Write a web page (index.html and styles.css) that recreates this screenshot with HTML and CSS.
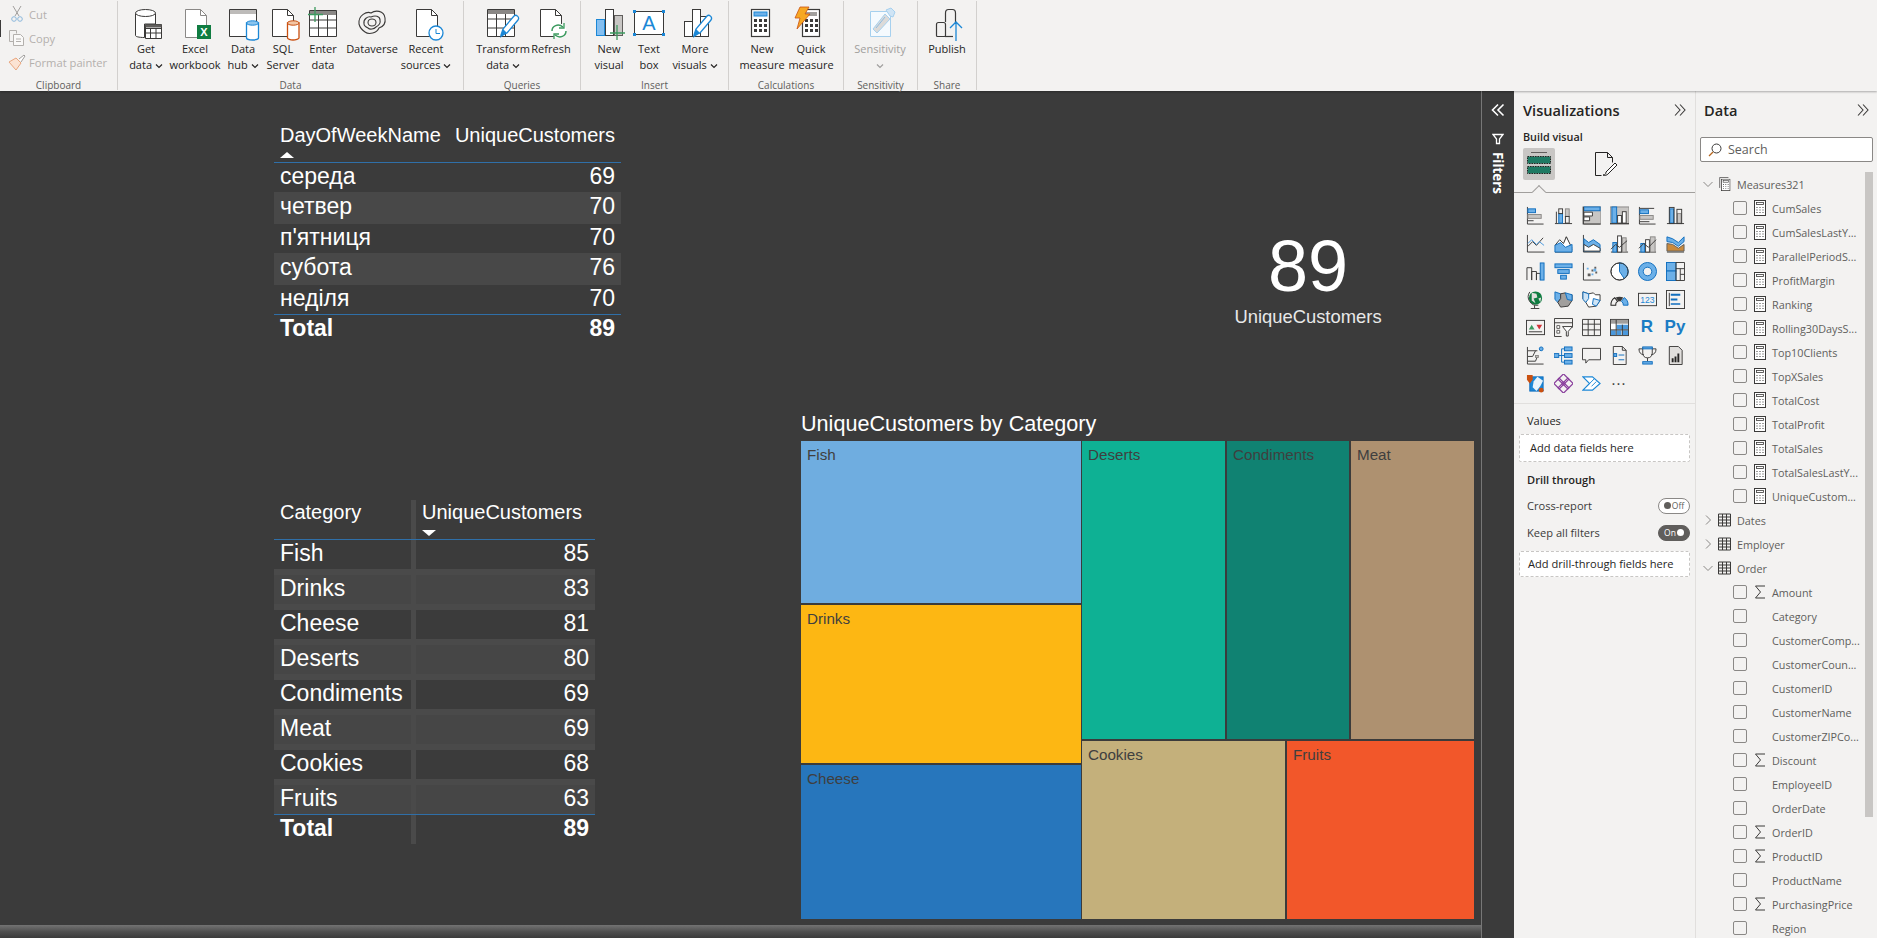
FILE: index.html
```html
<!DOCTYPE html>
<html>
<head>
<meta charset="utf-8">
<title>Power BI Desktop</title>
<link rel="stylesheet" href="styles.css">
</head>
<body>
<svg class="defs" width="0" height="0">
  <symbol id="calc" viewBox="0 0 12 16">
    <rect x=".5" y=".5" width="11" height="15" fill="#fff" stroke="#3b3a39"/>
    <rect x="2.5" y="2.5" width="7" height="2" fill="none" stroke="#3b3a39" stroke-width=".8"/>
    <path d="M2.5 7h1v1h-1zM5.5 7h1v1h-1zM8.5 7h1v1h-1zM2.5 9.5h1v1h-1zM5.5 9.5h1v1h-1zM8.5 9.5h1v1h-1zM2.5 12h1v1h-1zM5.5 12h1v1h-1zM8.5 12h1v1h-1z" fill="#3b3a39"/>
  </symbol>
  <symbol id="grid" viewBox="0 0 13 13">
    <path d="M.5.5h12v12H.5zM.5 3.5h12M.5 6.5h12M.5 9.5h12M4.5 .5v12M8.5 .5v12" fill="none" stroke="#3b3a39"/>
  </symbol>
  <symbol id="sigma" viewBox="0 0 12 14">
    <path d="M11 1H1.5L6.5 7 1.5 13H11" fill="none" stroke="#3b3a39"/>
  </symbol>
  <symbol id="more" viewBox="0 0 8 8">
    <path d="M1 2.5L4 5.5 7 2.5" fill="none" stroke="#252423" stroke-width="1.2"/>
  </symbol>
  <symbol id="dbl" viewBox="0 0 14 14">
    <path d="M2 1.5L7 7 2 12.5M7 1.5L12 7 7 12.5" fill="none" stroke="#3b3a39" stroke-width="1.1"/>
  </symbol>
</svg>

<div class="ribbon">
  <div class="group clip">
    <div class="group-body">
      <div class="clip-list">
        <div class="clip-item"><svg width="18" height="18" viewBox="0 0 18 18"><path d="M5 1l6 10M13 1L7 11" fill="none" stroke="#a19f9d"/><circle cx="6" cy="14" r="2.3" fill="none" stroke="#8cb8dc"/><circle cx="12" cy="14" r="2.3" fill="none" stroke="#8cb8dc"/></svg><span>Cut</span></div>
        <div class="clip-item"><svg width="18" height="18" viewBox="0 0 18 18"><path d="M1.500 1.500h7v3M1.500 1.500v11h4" fill="none" stroke="#b3b0ad"/><path d="M5.500 5.500h7l3 3v8h-10z" fill="#faf9f8" stroke="#b3b0ad"/><path d="M8 10h5M8 12.500h5" stroke="#b3b0ad"/></svg><span>Copy</span></div>
        <div class="clip-item"><svg width="18" height="18" viewBox="0 0 18 18"><path d="M1 9l7-4 5 5-5 7C6 14 3 12 1 9z" fill="#fbe3d3" stroke="#e9a77f"/><path d="M11 6l5-4 1 1-4 6" fill="#fff" stroke="#a19f9d"/></svg><span>Format painter</span></div>
      </div>
    </div>
    <div class="group-name">Clipboard</div>
  </div>

  <div class="group data">
    <div class="group-body">
      <div class="btn w44"><svg class="ico" viewBox="0 0 32 32"><path d="M5.500 6.500v22c0 1 3 2 9 2V17h11V6.500" fill="#fff" stroke="#3b3a39"/><ellipse cx="15.500" cy="6" rx="10" ry="3.500" fill="#fff" stroke="#3b3a39"/><path d="M15.500 17.500h16v14h-16zM15.500 21.500h16M15.500 26h16M20.500 21.500v10M26 21.500v10" fill="#fff" stroke="#3b3a39"/><rect x="15.500" y="17.500" width="16" height="3" fill="#605e5c"/></svg><div class="txt">Get<br>data <svg class="caret"><use href="#more"/></svg></div></div>
      <div class="btn w54"><svg class="ico" viewBox="0 0 32 32"><path d="M6.500 2.500h15l6 6v22h-21z" fill="#fff" stroke="#8a8886"/><path d="M21.500 2.500v6h6" fill="none" stroke="#8a8886"/><rect x="18" y="18" width="14" height="14" fill="#107c41"/><text x="25" y="29" class="xl">X</text></svg><div class="txt">Excel<br>workbook</div></div>
      <div class="btn w42"><svg class="ico" viewBox="0 0 32 32"><path d="M2.500 2.500h27v27h-27z" fill="#fff" stroke="#3b3a39"/><rect x="3" y="3" width="26" height="4" fill="#bdbbb9"/><path d="M19.500 16v15c0 1 3 2 6 2s6-1 6-2V16z" fill="#fff" stroke="#1b87d6" stroke-width="1.300"/><ellipse cx="25.500" cy="16" rx="6" ry="2.200" fill="#8ac4ee" stroke="#1b87d6"/></svg><div class="txt">Data<br>hub <svg class="caret"><use href="#more"/></svg></div></div>
      <div class="btn w38"><svg class="ico" viewBox="0 0 32 32"><path d="M5.500 2.500h15l6 6v21h-21z" fill="#fff" stroke="#3b3a39"/><path d="M20.500 2.500v6h6" fill="none" stroke="#3b3a39"/><path d="M20.500 16v15c0 1 3 2 5.500 2s6-1 6-2V16z" fill="#fff" stroke="#ca5010" stroke-width="1.300"/><ellipse cx="26.200" cy="16" rx="5.800" ry="2.200" fill="#f2c5a4" stroke="#ca5010"/></svg><div class="txt">SQL<br>Server</div></div>
      <div class="btn w42"><svg class="ico" viewBox="0 0 32 32"><path d="M2.500 3.500h27v26h-27zM2.500 13h27M2.500 21h27M11.500 8v21.500M20.500 8v21.500" fill="#fff" stroke="#3b3a39"/><rect x="3" y="4" width="26" height="4" fill="#8a8886"/><path d="M8 0v15M1 7.500h15" stroke="#3c9a5f" stroke-width="1.300"/></svg><div class="txt">Enter<br>data</div></div>
      <div class="btn w56"><svg class="ico" viewBox="0 0 32 32"><g fill="none" stroke="#3b3a39" stroke-width="1.100"><path d="M3 17C2 8 11 4 15 6c4-3 13-3 14 5 1 6-3 9-6 10-2 5-10 7-14 4-3-2-5-4-6-8z"/><path d="M8 17c-1-5 4-8 7-7 4-2 9-1 9 3 1 4-2 6-4 7-2 2-6 3-8 1-2-1-4-2-4-4z"/><ellipse cx="16" cy="15.500" rx="4" ry="3.500"/></g></svg><div class="txt one">Dataverse</div></div>
      <div class="btn w52"><svg class="ico" viewBox="-2 0 32 32"><path d="M4.500 2.500h15l6 6v21h-21z" fill="#fff" stroke="#3b3a39"/><path d="M19.500 2.500v6h6" fill="none" stroke="#3b3a39"/><circle cx="24" cy="26" r="7" fill="#fff" stroke="#1b87d6" stroke-width="1.300"/><path d="M24 22v4.500h4" fill="none" stroke="#1b87d6"/></svg><div class="txt">Recent<br>sources <svg class="caret"><use href="#more"/></svg></div></div>
    </div>
    <div class="group-name">Data</div>
  </div>

  <div class="group queries">
    <div class="group-body">
      <div class="btn w54"><svg class="ico" viewBox="2 0 32 32"><path d="M2.500 2.500h27v27h-27zM2.500 12h27M2.500 21h27M11.500 7v22.500M20.500 7v22.500" fill="#fff" stroke="#3b3a39"/><rect x="3" y="3" width="26" height="4" fill="#8a8886"/><path d="M16 28l2-6 11-13c2-2 6 1 4 4L22 26z" fill="#fff" stroke="#1b87d6" stroke-width="1.300"/><path d="M15 31l3-9 4 4z" fill="#1b87d6"/></svg><div class="txt">Transform<br>data <svg class="caret"><use href="#more"/></svg></div></div>
      <div class="btn w42"><svg class="ico" viewBox="0 0 32 32"><path d="M5.500 2.500h15l6 6v21h-21z" fill="#fff" stroke="#3b3a39"/><path d="M20.500 2.500v6h6" fill="none" stroke="#3b3a39"/><circle cx="24" cy="24" r="7.500" fill="#fff"/><path d="M17 24c0-5 6-8 11-4M31 24c0 5-6 8-11 4" fill="none" stroke="#3c9a5f" stroke-width="1.500"/><path d="M29 16v5h-5M19 32v-5h5" fill="none" stroke="#3c9a5f" stroke-width="1.300"/></svg><div class="txt">Refresh<br>&nbsp;</div></div>
    </div>
    <div class="group-name">Queries</div>
  </div>

  <div class="group insert">
    <div class="group-body">
      <div class="btn w40"><svg class="ico" viewBox="0 0 32 32"><rect x="3.500" y="12.500" width="8" height="16" fill="#85bff0" stroke="#1b87d6"/><rect x="12.500" y="2.500" width="8" height="26" fill="#fff" stroke="#3b3a39"/><rect x="21.500" y="8.500" width="8" height="20" fill="#c8c6c4" stroke="#605e5c"/><path d="M24 18v15M17 26h15" stroke="#3c9a5f" stroke-width="1.300"/></svg><div class="txt">New<br>visual</div></div>
      <div class="btn w40"><svg class="ico" viewBox="0 0 32 32"><rect x="1.500" y="4.500" width="29" height="23" fill="#fff" stroke="#3b3a39"/><path d="M0 3h3v3H0zM29 3h3v3h-3zM0 26h3v3H0zM29 26h3v3h-3z" fill="#1b87d6"/><text x="16" y="23" class="boxa">A</text></svg><div class="txt">Text<br>box</div></div>
      <div class="btn w52"><svg class="ico" viewBox="0 0 32 32"><rect x="5.500" y="14.500" width="8" height="15" fill="#fff" stroke="#3b3a39"/><rect x="13.500" y="2.500" width="8" height="27" fill="#fff" stroke="#3b3a39"/><rect x="21.500" y="9.500" width="8" height="20" fill="#fff" stroke="#3b3a39"/><path d="M15 28l2-6 11-13c2-2 6 1 4 4L21 26z" fill="#fff" stroke="#1b87d6" stroke-width="1.300"/><path d="M14 31l3-9 4 4z" fill="#1b87d6"/></svg><div class="txt">More<br>visuals <svg class="caret"><use href="#more"/></svg></div></div>
    </div>
    <div class="group-name">Insert</div>
  </div>

  <div class="group calc">
    <div class="group-body">
      <div class="btn w50"><svg class="ico" viewBox="0 0 32 32"><rect x="5.500" y="2.500" width="18" height="27" fill="#fff" stroke="#3b3a39" stroke-width="1.200"/><rect x="8" y="5" width="13" height="4" fill="#6cb0e8" stroke="#1b87d6"/><path d="M8 12h3v3H8zM13 12h3v3h-3zM18 12h3v3h-3zM8 17h3v3H8zM13 17h3v3h-3zM18 17h3v3h-3zM8 22h3v3H8zM13 22h3v3h-3zM18 22h3v3h-3z" fill="#3b3a39"/></svg><div class="txt">New<br>measure</div></div>
      <div class="btn w48"><svg class="ico" viewBox="0 0 32 32"><rect x="7.500" y="2.500" width="17" height="27" fill="#fff" stroke="#3b3a39" stroke-width="1.200"/><rect x="10" y="5" width="12" height="4" fill="#a19f9d"/><path d="M10 12h3v3h-3zM15 12h3v3h-3zM20 12h3v3h-3zM10 17h3v3h-3zM15 17h3v3h-3zM20 17h3v3h-3zM10 22h3v3h-3zM15 22h3v3h-3zM20 22h3v3h-3z" fill="#3b3a39"/><path d="M5 0h9l-4 7h5L2 22l3-11H0z" fill="#f7a823" stroke="#ca5010" stroke-width=".8"/></svg><div class="txt">Quick<br>measure</div></div>
    </div>
    <div class="group-name">Calculations</div>
  </div>

  <div class="group sens">
    <div class="group-body">
      <div class="btn w62 off"><svg class="ico" viewBox="0 0 32 32"><path d="M6.500 4.500h20v25h-20z" fill="#f5fafe" stroke="#a6d0ee"/><path d="M9 22L21 7l5 5-13 14z" fill="#dcdad8" stroke="#a6d0ee"/><path d="M22 3l5-2 4 4-2 5-3-1z" fill="#cfe4f5" stroke="#a6d0ee"/><path d="M12 21l9-11" stroke="#8cbce4"/></svg><div class="txt">Sensitivity<br><svg class="caret faint"><use href="#more"/></svg></div></div>
    </div>
    <div class="group-name">Sensitivity</div>
  </div>

  <div class="group share">
    <div class="group-body">
      <div class="btn w50"><svg class="ico" viewBox="0 0 32 32"><path d="M5.500 17.500c0-1 .5-2 2-2h5c1 0 2 1 2 2v11c0 .500-.500 1-1 1h-7c-.500 0-1-.500-1-1zM14.500 15V6c0-2 1-3.500 3-3.500h4c2 0 3 1.500 3 3.500v11" fill="none" stroke="#3b3a39" stroke-width="1.200"/><path d="M14 29.500h8" stroke="#3b3a39" stroke-width="1.200"/><path d="M25 34V15M19 21l6-6 6 6" fill="none" stroke="#1b87d6" stroke-width="1.300"/></svg><div class="txt one">Publish</div></div>
    </div>
    <div class="group-name">Share</div>
  </div>
</div>

<div class="main">
  <div class="canvas">
    <div class="visual tbl1">
      <div class="hd"><div class="c">DayOfWeekName<i class="sort up"></i></div><div class="c r">UniqueCustomers</div></div>
      <div class="tr"><div class="c">середа</div><div class="c r">69</div></div>
      <div class="tr alt"><div class="c">четвер</div><div class="c r">70</div></div>
      <div class="tr"><div class="c">п'ятниця</div><div class="c r">70</div></div>
      <div class="tr alt"><div class="c">субота</div><div class="c r">76</div></div>
      <div class="tr"><div class="c">неділя</div><div class="c r">70</div></div>
      <div class="tot"><div class="c">Total</div><div class="c r">89</div></div>
    </div>

    <div class="visual tbl2">
      <div class="hd"><div class="c">Category</div><div class="c">UniqueCustomers<i class="sort down"></i></div></div>
      <div class="tr"><div class="c">Fish</div><div class="c r">85</div></div>
      <div class="tr alt"><div class="c">Drinks</div><div class="c r">83</div></div>
      <div class="tr"><div class="c">Cheese</div><div class="c r">81</div></div>
      <div class="tr alt"><div class="c">Deserts</div><div class="c r">80</div></div>
      <div class="tr"><div class="c">Condiments</div><div class="c r">69</div></div>
      <div class="tr alt"><div class="c">Meat</div><div class="c r">69</div></div>
      <div class="tr"><div class="c">Cookies</div><div class="c r">68</div></div>
      <div class="tr alt last"><div class="c">Fruits</div><div class="c r">63</div></div>
      <div class="tot"><div class="c">Total</div><div class="c r">89</div></div>
    </div>

    <div class="visual card">
      <div class="card-num">89</div>
      <div class="card-label">UniqueCustomers</div>
    </div>

    <div class="visual tree">
      <div class="tree-title">UniqueCustomers by Category</div>
      <div class="tree-map">
        <div class="tree-left">
          <div class="cell fish">Fish</div>
          <div class="cell drinks">Drinks</div>
          <div class="cell cheese">Cheese</div>
        </div>
        <div class="tree-right">
          <div class="tree-top">
            <div class="cell deserts">Deserts</div>
            <div class="cell condiments">Condiments</div>
            <div class="cell meat">Meat</div>
          </div>
          <div class="tree-bot">
            <div class="cell cookies">Cookies</div>
            <div class="cell fruits">Fruits</div>
          </div>
        </div>
      </div>
    </div>
    <div class="visual page-edge"></div>
  </div>

  <div class="filters">
    <svg width="14" height="14" viewBox="0 0 14 14"><path d="M7 1.500L1.500 7 7 12.500M12.500 1.500L7 7l5.500 5.500" fill="none" stroke="#fff" stroke-width="1.600"/></svg>
    <svg class="f-ico" width="12" height="12" viewBox="0 0 12 12"><path d="M1 1.500h10L7.500 6v4.500h-3V6z" fill="none" stroke="#fff" stroke-width="1.300"/></svg>
    <div class="f-label">Filters</div>
  </div>

  <div class="viz">
    <div class="pane-head"><span>Visualizations</span><svg width="14" height="14"><use href="#dbl"/></svg></div>
    <div class="build">Build visual</div>
    <div class="build-tabs">
      <div class="tab on"><svg width="26" height="26" viewBox="0 0 26 26"><path d="M5 1.500h16" stroke="#605e5c"/><rect x="1.500" y="5.500" width="23" height="7" fill="#1e7a63" stroke="#252423" stroke-dasharray="1.500 1"/><rect x="1.500" y="15.500" width="23" height="7" fill="#1e7a63" stroke="#252423" stroke-dasharray="1.500 1"/></svg></div>
      <div class="tab"><svg width="26" height="26" viewBox="0 0 26 26"><path d="M3.500 1.500h12l5 5v5M3.500 1.500v23h6M15.500 1.500v5h5" fill="none" stroke="#252423"/><path d="M11 24c2 0 3-1 3-3l9-9 2 2-9 9c-1 1-3 2-5 1z" fill="#fff" stroke="#252423"/></svg></div>
      <i class="notch"></i>
    </div>
    <div class="viz-grid">
      <svg viewBox="0 0 20 20"><path class="k" d="M1.500 1v18h17"/><rect class="b" x="2" y="3" width="8" height="4"/><rect class="g" x="2" y="9" width="14" height="4"/><path class="k" d="M2 15.500h6"/></svg>
      <svg viewBox="0 0 20 20"><path class="k" d="M1 18.500h18M2.500 18V6"/><rect class="b" x="5" y="8" width="4" height="10"/><rect class="k" x="5" y="3" width="4" height="5"/><rect class="g" x="12" y="3" width="4" height="8"/><rect class="k" x="12" y="11" width="4" height="7"/></svg>
      <svg viewBox="0 0 20 20"><rect class="g" x="1" y="1" width="19" height="18"/><rect class="b" x="2" y="1" width="17" height="4"/><path class="w" d="M2 6.500h9v4H2zM2 11.500h6v4H2z"/><path class="k" d="M1.500 1v18h18"/></svg>
      <svg viewBox="0 0 20 20"><rect class="g" x="0" y="1" width="20" height="18"/><rect class="b" x="2" y="1" width="5" height="17"/><rect class="w" x="8" y="10" width="4" height="8"/><rect class="w" x="13" y="6" width="4" height="12"/><path class="k" d="M0 18.500h20"/></svg>
      <svg viewBox="0 0 20 20"><path class="k" d="M1.500 1v18h17"/><path class="k" d="M2 2.500h15"/><rect class="b" x="2" y="4" width="9" height="4"/><rect class="g" x="2" y="10" width="14" height="4"/><path class="k" d="M2 16.500h10"/></svg>
      <svg viewBox="0 0 20 20"><path class="k" d="M1 18.500h18"/><rect class="b" x="4" y="3" width="4" height="15"/><rect class="g" x="12" y="8" width="4" height="10"/><rect class="k" x="3.500" y="1.500" width="5" height="17"/><rect class="k" x="11.500" y="3.500" width="5" height="15"/></svg>

      <svg viewBox="0 0 20 20"><path class="k" d="M1.500 1v18h18M2 13l5-5 4 4 7-8"/><path class="bl" d="M2 10l4-4 5 5 3-3 5 4"/></svg>
      <svg viewBox="0 0 20 20"><path class="w2" d="M8 17l5-14 6 14z"/><path class="k" d="M1 19h18"/><path class="w" d="M1 12l5-6 4 4 3-7 6 12"/><path class="b" d="M1 19v-7l6-3 5 5 7-3v8z"/></svg>
      <svg viewBox="0 0 20 20"><path class="k" d="M1.500 1v18h18"/><path class="b" d="M2 5l5 4 5-3 7 5v7H2z"/><path class="w" d="M2 11l5 3 5-3 7 4v3H2z"/></svg>
      <svg viewBox="0 0 20 20"><path class="k" d="M1 19h18"/><rect class="b" x="3" y="9" width="4" height="10"/><rect class="g" x="13" y="4" width="4" height="15"/><rect class="w" x="8" y="2" width="4" height="17"/><path class="k" d="M1 16l5-5 4 3 8-7"/></svg>
      <svg viewBox="0 0 20 20"><path class="k" d="M1 19h18"/><rect class="b" x="3" y="10" width="4" height="9"/><rect class="w" x="8" y="6" width="4" height="13"/><rect class="g" x="13" y="3" width="5" height="16"/><path class="k" d="M1 15l5-5 5 4 8-8"/></svg>
      <svg viewBox="0 0 20 20"><path class="k" d="M1 19h18"/><path d="M1 3l6 2 6 4 6-6v5l-6 5-6-4-6-1z" fill="#6cb0e8" stroke="#106ebe"/><path d="M1 10l6 1 6 4 6-4v7H1z" fill="#ca8a3c" stroke="#605e5c"/></svg>

      <svg viewBox="0 0 20 20"><path class="k" d="M1 19V6h5v13M6 19v-9h5v9M11 19V12h4v7"/><rect class="b" x="15" y="1" width="4" height="18"/></svg>
      <svg viewBox="0 0 20 20"><rect class="b" x="1" y="2" width="18" height="4"/><rect class="b" x="4" y="8" width="12" height="4"/><rect class="b" x="7" y="14" width="6" height="4"/></svg>
      <svg viewBox="0 0 20 20"><path class="k" d="M1.500 1v18h18"/><path d="M6 12h3v3H6zM10 8h2v2h-2zM13 5h2v2h-2zM14 10h2v2h-2z" fill="#605e5c"/><path d="M10 12h2v2h-2zM5 6h2v2H5zM12 7h3v3h-3z" fill="#6cb0e8"/></svg>
      <svg viewBox="0 0 20 20"><circle class="w" cx="10" cy="10" r="9"/><path class="b" d="M10 10V1a9 9 0 0 1 5 16.500z"/><circle class="k" cx="10" cy="10" r="9"/></svg>
      <svg viewBox="0 0 20 20"><circle cx="10" cy="10" r="7" fill="none" stroke="#6cb0e8" stroke-width="5"/><circle class="bk" cx="10" cy="10" r="9.500"/><circle class="bk" cx="10" cy="10" r="4.500"/></svg>
      <svg viewBox="0 0 20 20"><rect class="b" x=".5" y=".5" width="10" height="9"/><rect class="b" x=".5" y="9.500" width="10" height="10"/><path class="k" d="M10.500 .5h9v19h-9zM10.500 7h9M15 7v12.500M15 13h4.500"/></svg>

      <svg viewBox="0 0 20 20"><circle cx="10" cy="8.500" r="7" fill="#107c41"/><path d="M6 3l5 1 1 4-4 1 2 5-4-3zM13 9l3-1-1 5z" fill="#e1dfdd"/><path class="k" d="M4 2a9 9 0 0 0 9 14M9 16v3M5 19.500h9"/></svg>
      <svg viewBox="0 0 20 20"><path d="M1 2l6 2v5l-3 4-3-3z" fill="#6cb0e8" stroke="#106ebe"/><path d="M7 4l5-1 2 2 5 0v6l-4 6-8 1-3-5 3-4z" fill="#a19f9d" stroke="#3b3a39"/><path d="M12 3l7 2v6l-5-1z" fill="#6cb0e8" stroke="#106ebe"/></svg>
      <svg viewBox="0 0 20 20"><path class="w" d="M1 2l6 2 5-1 2 2 5 0v6l-4 6-8 1-3-5-3-4z" stroke="#106ebe"/><path d="M1 2l6 2v5L4 13 1 10z" fill="#cfe4f5" stroke="#106ebe"/><path d="M12 9l7 2-4 6-4-2z" fill="#cfe4f5" stroke="#106ebe"/></svg>
      <svg viewBox="0 0 20 20"><path d="M1 16a9 9 0 0 1 4-8l3 4a4 4 0 0 0-2 4z" fill="none" stroke="#252423" stroke-width="1.100"/><path d="M6 8a9 9 0 0 1 8 0l-3 4a4 4 0 0 0-2 0z" fill="#3b3a39"/><path d="M15 8a9 9 0 0 1 4 8h-5a4 4 0 0 0-2-4z" fill="#6cb0e8" stroke="#106ebe"/></svg>
      <svg viewBox="0 0 20 20"><rect class="k" x=".5" y="3.500" width="19" height="13"/><text x="10" y="14" class="n123">123</text></svg>
      <svg viewBox="0 0 20 20"><rect class="k" x=".5" y=".5" width="19" height="19"/><path class="k" d="M3.500 3v14"/><path d="M5 4h10v2H5zM5 9h7v2H5zM5 14h10v1.500H5z" fill="#106ebe"/></svg>

      <svg viewBox="0 0 20 20"><rect class="k" x=".5" y="2.500" width="19" height="15"/><path d="M3 12l3-5 3 5z" fill="#3c9a5f"/><path d="M11 7h6l-3 5z" fill="#d13438"/><path class="k" d="M3 14.500h14"/></svg>
      <svg viewBox="0 0 20 20"><path class="k" d="M.5 19.500V.5h19V10M.5 5h19M.5 19.500H8"/><path d="M3 8h3v3H3zM3 13h3v3H3z" fill="#fff" stroke="#605e5c"/><path d="M9 9h10.500L15 14v5h-2v-5z" fill="#fff" stroke="#3b3a39"/></svg>
      <svg viewBox="0 0 20 20"><path class="k" d="M.5 1.500h19v17H.5zM.5 6.500h19M.5 12.500h19M6.500 1.500v17M13 1.500v17"/></svg>
      <svg viewBox="0 0 20 20"><rect x=".5" y="1.500" width="19" height="17" fill="#fff" stroke="#3b3a39"/><rect x="1" y="2" width="18" height="4" fill="#a19f9d"/><path d="M7 7h12v5H7zM7 13h5v5H7zM13 13h6v5h-6zM1 13h5v5H1z" fill="#4a98dc"/><path class="k" d="M1 12.500h18M6.500 2v16M13 7v11"/></svg>
      <div class="lang">R</div>
      <div class="lang">Py</div>

      <svg viewBox="0 0 20 20"><path class="k" d="M1.500 1v18h17M2 5h10M2 11h5l3-6M2 16h8l2-5"/><circle class="b" cx="16" cy="3" r="2"/><rect class="g" x="10" y="10" width="3" height="2"/></svg>
      <svg viewBox="0 0 20 20"><rect class="b" x="0" y="8" width="5" height="4"/><rect class="b" x="11" y="1" width="8" height="4"/><rect class="b" x="11" y="8" width="8" height="4"/><rect class="b" x="11" y="15" width="8" height="4"/><path class="bk" d="M5 10h6M8 3v14M8 3h3M8 17h3"/></svg>
      <svg viewBox="0 0 20 20"><path class="k" d="M.5 2.500h19v12H7L4 18v-3.500H.5z" stroke="#106ebe"/></svg>
      <svg viewBox="0 0 20 20"><path class="k" d="M3.500 .5H13l4 4v15H3.500z"/><path class="k" d="M13 .5v4h4"/><path class="bk" d="M9 9.500h6M9 14.500h6"/><rect class="b" x="4" y="8" width="3" height="3"/></svg>
      <svg viewBox="0 0 20 20"><path class="k" d="M5 1.500h10v6c0 3-2 5-5 5s-5-2-5-5zM5 3H1c0 4 2 6 5 6M15 3h4c0 4-2 6-5 6M10 12.500V16"/><rect class="b" x="5" y="16.500" width="10" height="2.500"/><rect class="b" x="5" y="1" width="10" height="2"/></svg>
      <svg viewBox="0 0 20 20"><path d="M3.500 .5H13l4 4v15H3.500z" fill="#e1dfdd" stroke="#3b3a39"/><path d="M6 17v-4h2v4zM9 17v-6h2v6zM12 17V8h2v9z" fill="#252423"/></svg>

      <svg viewBox="0 0 20 20"><rect x="4" y="3" width="14" height="15" fill="#1b87d6" stroke="#106ebe"/><path d="M8 8l4-5 6 4-3 6-4 5-4-4z" fill="#e8f3fb"/><path d="M1 1h6v5l-3 4-3-4z" fill="#ca5010"/><circle cx="16" cy="17" r="2.500" fill="#ca5010"/></svg>
      <svg viewBox="0 0 20 20"><g fill="none" stroke="#8a3f9d" stroke-width="1.300"><rect x="6" y="1.500" width="8" height="8" transform="rotate(45 10 5.500)"/><rect x="6" y="10.500" width="8" height="8" transform="rotate(45 10 14.500)"/><rect x="1.500" y="6" width="8" height="8" transform="rotate(45 5.500 10)"/><rect x="10.500" y="6" width="8" height="8" transform="rotate(45 14.500 10)"/></g></svg>
      <svg viewBox="0 0 20 20"><path d="M1 3h10l8 7-8 7H1l7-7z" fill="#fff" stroke="#1b87d6" stroke-width="1.200"/><path d="M8 10l5-5M10 13l5-5" stroke="#1b87d6"/></svg>
      <div class="dots">···</div>
    </div>
    <div class="well-area">
      <div class="well-label">Values</div>
      <div class="drop">Add data fields here</div>
      <div class="well-head">Drill through</div>
      <div class="opt"><span>Cross-report</span><span class="tog"><i></i>Off</span></div>
      <div class="opt"><span>Keep all filters</span><span class="tog on">On<i></i></span></div>
      <div class="drop wide">Add drill-through fields here</div>
    </div>
  </div>

  <div class="data-pane">
    <div class="pane-head"><span>Data</span><svg width="14" height="14"><use href="#dbl"/></svg></div>
    <div class="search"><svg width="14" height="14" viewBox="0 0 14 14"><circle cx="8.500" cy="5.500" r="4.500" fill="none" stroke="#3b3a39"/><path d="M5 9L1 13" stroke="#b5651d" stroke-width="1.300"/></svg><span>Search</span></div>
    <div class="tree-wrap">
      <div class="thumb"></div>
      <div class="row grp"><svg class="chev" viewBox="0 0 10 10"><path d="M.5 3L5 7.500 9.500 3"/></svg><svg class="ti" viewBox="0 0 14 16"><path d="M1.500 12.500V.5h10" fill="none" stroke="#3b3a39" stroke-width=".8"/><use href="#calc" x="3" y="2" width="11" height="14"/></svg><span>Measures321</span></div>
      <div class="row"><i class="chk"></i><svg class="fi"><use href="#calc"/></svg><span>CumSales</span></div>
      <div class="row"><i class="chk"></i><svg class="fi"><use href="#calc"/></svg><span>CumSalesLastY...</span></div>
      <div class="row"><i class="chk"></i><svg class="fi"><use href="#calc"/></svg><span>ParallelPeriodS...</span></div>
      <div class="row"><i class="chk"></i><svg class="fi"><use href="#calc"/></svg><span>ProfitMargin</span></div>
      <div class="row"><i class="chk"></i><svg class="fi"><use href="#calc"/></svg><span>Ranking</span></div>
      <div class="row"><i class="chk"></i><svg class="fi"><use href="#calc"/></svg><span>Rolling30DaysS...</span></div>
      <div class="row"><i class="chk"></i><svg class="fi"><use href="#calc"/></svg><span>Top10Clients</span></div>
      <div class="row"><i class="chk"></i><svg class="fi"><use href="#calc"/></svg><span>TopXSales</span></div>
      <div class="row"><i class="chk"></i><svg class="fi"><use href="#calc"/></svg><span>TotalCost</span></div>
      <div class="row"><i class="chk"></i><svg class="fi"><use href="#calc"/></svg><span>TotalProfit</span></div>
      <div class="row"><i class="chk"></i><svg class="fi"><use href="#calc"/></svg><span>TotalSales</span></div>
      <div class="row"><i class="chk"></i><svg class="fi"><use href="#calc"/></svg><span>TotalSalesLastY...</span></div>
      <div class="row"><i class="chk"></i><svg class="fi"><use href="#calc"/></svg><span>UniqueCustom...</span></div>
      <div class="row grp"><svg class="chev" viewBox="0 0 10 10"><path d="M3 .5L7.500 5 3 9.500"/></svg><svg class="ti"><use href="#grid"/></svg><span>Dates</span></div>
      <div class="row grp"><svg class="chev" viewBox="0 0 10 10"><path d="M3 .5L7.500 5 3 9.500"/></svg><svg class="ti"><use href="#grid"/></svg><span>Employer</span></div>
      <div class="row grp"><svg class="chev" viewBox="0 0 10 10"><path d="M.5 3L5 7.500 9.500 3"/></svg><svg class="ti"><use href="#grid"/></svg><span>Order</span></div>
      <div class="row"><i class="chk"></i><svg class="fi"><use href="#sigma"/></svg><span>Amount</span></div>
      <div class="row"><i class="chk"></i><i class="fi"></i><span>Category</span></div>
      <div class="row"><i class="chk"></i><i class="fi"></i><span>CustomerComp...</span></div>
      <div class="row"><i class="chk"></i><i class="fi"></i><span>CustomerCoun...</span></div>
      <div class="row"><i class="chk"></i><i class="fi"></i><span>CustomerID</span></div>
      <div class="row"><i class="chk"></i><i class="fi"></i><span>CustomerName</span></div>
      <div class="row"><i class="chk"></i><i class="fi"></i><span>CustomerZIPCo...</span></div>
      <div class="row"><i class="chk"></i><svg class="fi"><use href="#sigma"/></svg><span>Discount</span></div>
      <div class="row"><i class="chk"></i><i class="fi"></i><span>EmployeeID</span></div>
      <div class="row"><i class="chk"></i><i class="fi"></i><span>OrderDate</span></div>
      <div class="row"><i class="chk"></i><svg class="fi"><use href="#sigma"/></svg><span>OrderID</span></div>
      <div class="row"><i class="chk"></i><svg class="fi"><use href="#sigma"/></svg><span>ProductID</span></div>
      <div class="row"><i class="chk"></i><i class="fi"></i><span>ProductName</span></div>
      <div class="row"><i class="chk"></i><svg class="fi"><use href="#sigma"/></svg><span>PurchasingPrice</span></div>
      <div class="row"><i class="chk"></i><i class="fi"></i><span>Region</span></div>
    </div>
  </div>
</div>
</body>
</html>
```

FILE: styles.css
```css
html, body {
    margin: 0;
    height: 100%;
    overflow: hidden;
}
body {
    width: 1877px;
    height: 938px;
    font-family: "Open Sans", "Noto Sans", sans-serif;
    color: #252423;
    background: #3b3b3b;
}
.defs {
    position: absolute;
}

/* ribbon */
.ribbon {
    display: flex;
    height: 91px;
    background: #f3f2f1;
    box-shadow: 0 1px 2px rgba(0,0,0,.3);
    position: relative;
    z-index: 2;
}
.group {
    display: flex;
    flex-direction: column;
    position: relative;
    box-sizing: border-box;
    border-right: 1px solid #d2d0ce;
    height: 89px;
    margin-top: 1px;
}
.group-body {
    display: flex;
    height: 77px;
    flex: none;
}
.group-name {
    text-align: center;
    font-size: 10px;
    line-height: 14px;
    color: #605e5c;
}
.clip { width: 118px; }
.data { width: 346px; }
.data .group-body { padding-left: 6px; }
.queries { width: 117px; }
.queries .group-body { padding-left: 12px; }
.insert { width: 148px; }
.insert .group-body { padding-left: 8px; }
.calc { width: 115px; }
.calc .group-body { padding-left: 8px; }
.sens { width: 74px; }
.sens .group-body { padding-left: 5px; }
.share { width: 59px; }
.share .group-body { padding-left: 4px; }

.btn {
    display: flex;
    flex-direction: column;
    align-items: center;
    flex: none;
}
.w38 { width: 38px; }
.w40 { width: 40px; }
.w42 { width: 42px; }
.w44 { width: 44px; }
.w48 { width: 48px; }
.w50 { width: 50px; }
.w52 { width: 52px; }
.w54 { width: 54px; }
.w56 { width: 56px; }
.w62 { width: 62px; }
.ico {
    width: 32px;
    height: 32px;
    margin-top: 6px;
    flex: none;
    overflow: visible;
}
.txt {
    margin-top: 2px;
    font-size: 11px;
    line-height: 16px;
    text-align: center;
    white-space: nowrap;
}
.off .txt { color: #a19f9d; }
.caret {
    width: 8px;
    height: 8px;
    vertical-align: -1px;
}
.caret.faint { opacity: .4; }
.xl {
    font: bold 11px "Liberation Sans", sans-serif;
    fill: #fff;
    text-anchor: middle;
}
.boxa {
    font: 20px "Liberation Sans", sans-serif;
    fill: #1b87d6;
    text-anchor: middle;
}
.clip-list {
    padding: 1px 0 0 8px;
}
.clip-item {
    display: flex;
    align-items: center;
    gap: 3px;
    height: 24px;
    font-size: 11.2px;
    color: #b3b0ad;
}
.clip::before {
    content: "";
    position: absolute;
    left: 0;
    top: 19px;
    height: 17px;
    width: 1px;
    background: #3b3a39;
}

/* main area */
.main {
    display: flex;
    height: 847px;
}
.canvas {
    position: relative;
    width: 1481px;
    flex: none;
    background: #3b3b3b;
    overflow: hidden;
    font-family: "Liberation Sans", Arial, sans-serif;
    color: #fff;
}
.visual {
    position: absolute;
}
.page-edge {
    left: 0;
    right: 0;
    top: 834px;
    height: 13px;
    background: linear-gradient(#737373, #505050 50%, #3b3b3b);
}

/* tables */
.tbl1 { left: 274px; top: 29px; width: 347px; }
.tbl2 { left: 274px; top: 409px; width: 321px; }
.hd, .tr, .tot {
    display: flex;
}
.c {
    padding: 0 6px;
    box-sizing: border-box;
    font-size: 23px;
    white-space: nowrap;
}
.r { text-align: right; }
.hd .c {
    font-size: 20px;
    position: relative;
}
.tot .c { font-weight: bold; }
.sort {
    position: absolute;
    left: 6px;
    width: 0;
    height: 0;
    border-left: 7px solid transparent;
    border-right: 7px solid transparent;
}
.sort.up { top: 32px; border-bottom: 6px solid #fff; }
.sort.down { top: 30px; border-top: 6px solid #fff; }

.tbl1 .c:first-child { width: 170px; }
.tbl1 .c.r { width: 177px; }
.tbl1 .hd {
    height: 42px;
    line-height: 30px;
    border-bottom: 1px solid #2f6fa8;
}
.tbl1 .tr {
    height: 29px;
    line-height: 27px;
}
.tbl1 .tr.alt {
    height: 32px;
    line-height: 28px;
    background: #484848;
}
.tbl1 .tot {
    height: 30px;
    line-height: 26px;
    border-top: 1px solid #2f6fa8;
}

.tbl2 .c:first-child {
    width: 142px;
    border-right: 5px solid #4a4a4a;
}
.tbl2 .c:last-child { width: 179px; }
.tbl2 .hd {
    height: 39px;
    line-height: 24px;
    border-bottom: 1px solid #2f6fa8;
}
.tbl2 .tr {
    height: 29px;
    line-height: 27px;
}
.tbl2 .tr.alt {
    height: 29px;
    line-height: 27px;
    border-top: 6px solid #4a4a4a;
    border-bottom: 6px solid #4a4a4a;
    background: #464646;
}
.tbl2 .tr.last { border-bottom: 0; }
.tbl2 .tot {
    height: 29px;
    line-height: 26px;
    border-top: 1px solid #2f6fa8;
}

/* card */
.card {
    left: 1188px;
    top: 135px;
    width: 240px;
    text-align: center;
}
.card-num {
    font-size: 72px;
    line-height: 80px;
}
.card-label {
    font-size: 18.4px;
    line-height: 22px;
    color: #e8e8e8;
}

/* treemap */
.tree {
    left: 801px;
    top: 318px;
    width: 673px;
}
.tree-title {
    font-size: 21.6px;
    line-height: 30px;
    height: 32px;
}
.tree-map {
    display: flex;
    gap: 1px;
    height: 478px;
}
.tree-left {
    display: flex;
    flex-direction: column;
    gap: 2px;
    width: 280px;
}
.tree-right {
    display: flex;
    flex-direction: column;
    gap: 2px;
    flex: 1;
}
.tree-top {
    display: flex;
    gap: 2px;
    height: 298px;
}
.tree-bot {
    display: flex;
    gap: 2px;
    flex: 1;
}
.cell {
    padding: 5px 5px 5px 6px;
    font-size: 15.2px;
    line-height: 18px;
    color: #3f3f3f;
    box-sizing: border-box;
}
.fish { background: #6fade0; height: 162px; }
.drinks { background: #fdb713; height: 158px; }
.cheese { background: #2776bc; flex: 1; }
.deserts { background: #0eb194; width: 143px; }
.condiments { background: #108272; width: 122px; }
.meat { background: #ae9170; flex: 1; }
.cookies { background: #c4b07b; width: 203px; }
.fruits { background: #f2572a; flex: 1; }

/* filters strip */
.filters {
    width: 33px;
    flex: none;
    box-sizing: border-box;
    border-left: 1px solid #777;
    background: #3b3b3b;
    display: flex;
    flex-direction: column;
    align-items: center;
    padding-top: 12px;
}
.f-ico { margin-top: 16px; }
.f-label {
    writing-mode: vertical-rl;
    color: #fff;
    font-weight: 700;
    font-size: 13.4px;
    line-height: 16px;
    margin-top: 7px;
}

/* panes */
.viz {
    width: 182px;
    flex: none;
    box-sizing: border-box;
    border-right: 1px solid #e1dfdd;
    background: #f3f2f1;
}
.data-pane {
    width: 181px;
    flex: none;
    background: #f3f2f1;
}
.pane-head {
    display: flex;
    justify-content: space-between;
    align-items: center;
    height: 38px;
    padding: 0 8px 0 9px;
    font-size: 14.6px;
    font-weight: 600;
}
.data-pane .pane-head { padding: 0 7px 0 8px; }
.build {
    margin: 0 0 0 9px;
    height: 15px;
    line-height: 15px;
    font-size: 10.8px;
    font-weight: 600;
    color: #252423;
}
.build-tabs {
    display: flex;
    gap: 34px;
    position: relative;
    margin-top: 4px;
    padding: 0 0 12px 9px;
    border-bottom: 1px solid #a19f9d;
}
.tab {
    width: 32px;
    height: 32px;
    display: flex;
    align-items: center;
    justify-content: center;
    border-radius: 2px;
}
.tab.on { background: #c8c6c4; }
.notch {
    position: absolute;
    left: 20px;
    bottom: -5px;
    width: 9px;
    height: 9px;
    transform: rotate(45deg);
    background: #f3f2f1;
    border-left: 1px solid #a19f9d;
    border-top: 1px solid #a19f9d;
}
.viz-grid {
    display: grid;
    grid-template-columns: repeat(6, 28px);
    grid-auto-rows: 28px;
    padding: 8px 0 6px 7px;
    border-bottom: 1px solid #e1dfdd;
    justify-items: center;
    align-items: center;
}
.viz-grid svg {
    width: 19px;
    height: 19px;
}
.k { fill: none; stroke: #3b3a39; }
.b { fill: #6cb0e8; stroke: #106ebe; }
.g { fill: #c8c6c4; stroke: #8a8886; }
.w { fill: #fff; stroke: #3b3a39; }
.w2 { fill: #c8c6c4; stroke: #3b3a39; }
.bl { fill: none; stroke: #4a98dc; }
.bk { fill: none; stroke: #106ebe; }
.n123 {
    font: 9px "Liberation Sans", sans-serif;
    fill: #1b87d6;
    text-anchor: middle;
}
.lang {
    font: bold 17px "Liberation Sans", sans-serif;
    color: #1b7cc4;
}
.dots {
    font-size: 15px;
    letter-spacing: 1px;
    color: #3b3a39;
}
.well-area {
    padding: 9px 5px 0 5px;
    font-size: 11.1px;
}
.well-label {
    padding-left: 8px;
    height: 21px;
    line-height: 16px;
}
.drop {
    height: 28px;
    line-height: 26px;
    box-sizing: border-box;
    border: 1px dashed #c8c6c4;
    border-radius: 2px;
    background: #fff;
    padding-left: 10px;
}
.drop.wide {
    padding-left: 8px;
    margin-top: 5px;
    height: 26px;
    line-height: 24px;
}
.well-head {
    font-weight: 600;
    padding-left: 8px;
    margin-top: 9px;
    height: 21px;
    line-height: 18px;
}
.opt {
    display: flex;
    justify-content: space-between;
    align-items: center;
    height: 27px;
    padding-left: 8px;
    color: #3b3a39;
}
.tog {
    display: flex;
    align-items: center;
    justify-content: center;
    gap: 1px;
    width: 32px;
    height: 16px;
    box-sizing: border-box;
    border: 1px solid #8a8886;
    border-radius: 8px;
    font-size: 8.5px;
    color: #605e5c;
    background: #fff;
}
.tog i {
    width: 7px;
    height: 7px;
    border-radius: 50%;
    background: #605e5c;
}
.tog.on {
    background: #605e5c;
    border-color: #605e5c;
    color: #fff;
}
.tog.on i { background: #fff; }

.search {
    display: flex;
    align-items: center;
    gap: 6px;
    margin: 8px 4px 0 4px;
    height: 25px;
    box-sizing: border-box;
    border: 1px solid #8a8886;
    border-radius: 2px;
    background: #fff;
    padding-left: 7px;
    font-size: 12.5px;
    color: #605e5c;
}
.tree-wrap {
    position: relative;
    margin-top: 10px;
    height: 776px;
    overflow: hidden;
}
.thumb {
    position: absolute;
    left: 169px;
    top: -1px;
    width: 8px;
    height: 646px;
    background: #c8c6c4;
}
.row {
    display: flex;
    align-items: center;
    height: 24.03px;
    padding-left: 37px;
    font-size: 10.8px;
    color: #605e5c;
    white-space: nowrap;
}
.row.grp { padding-left: 7px; }
.chev {
    width: 10px;
    height: 10px;
    flex: none;
    fill: none;
    stroke: #8a8886;
}
.ti {
    width: 13px;
    height: 14px;
    flex: none;
    margin: 0 6px 0 5px;
}
.chk {
    width: 12px;
    height: 12px;
    flex: none;
    border: 1px solid #8a8886;
    border-radius: 2px;
    background: #f3f2f1;
}
.fi {
    display: block;
    width: 12px;
    height: 16px;
    flex: none;
    margin: 0 6px 0 7px;
}
```
